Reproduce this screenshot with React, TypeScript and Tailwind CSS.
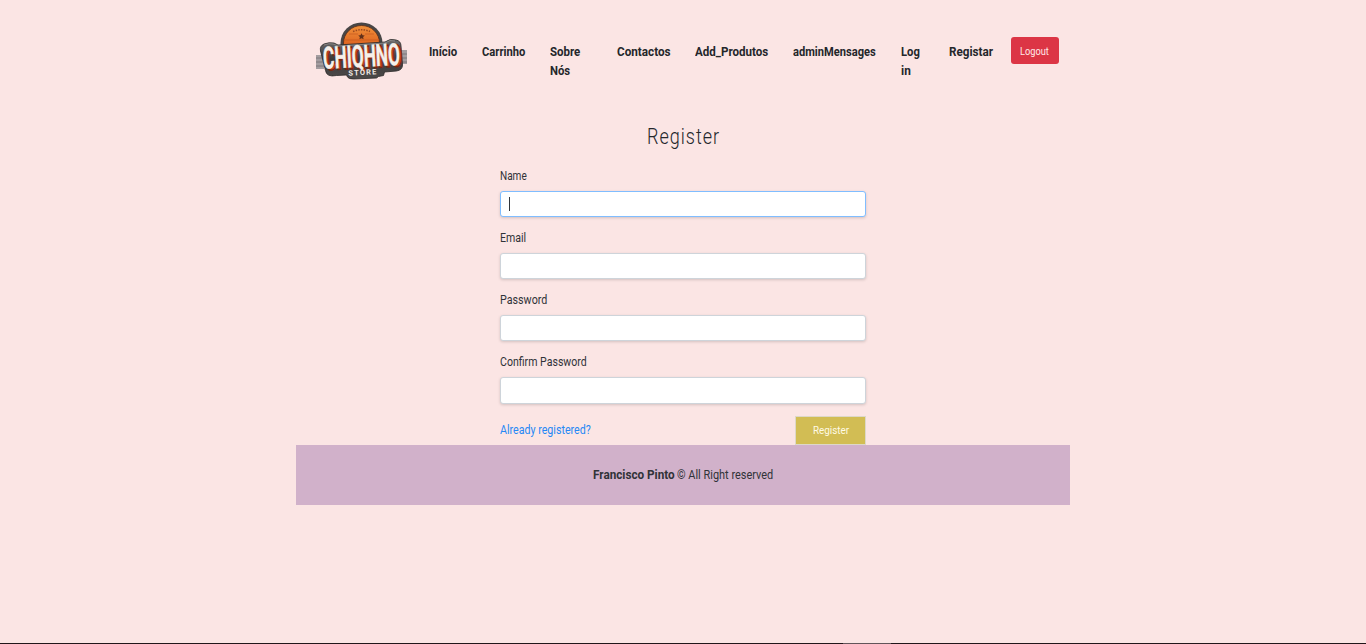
import { useLayoutEffect, useRef, useState } from "react";

/* Condenses a run of text so that it fills the width given in its class. */
function Fit({ children, className = "" }: { children: string; className?: string }) {
  const box = useRef<HTMLSpanElement>(null);
  const inner = useRef<HTMLSpanElement>(null);
  const [scale, setScale] = useState(1);
  useLayoutEffect(() => {
    if (box.current && inner.current && inner.current.offsetWidth > 0) {
      setScale(box.current.clientWidth / inner.current.offsetWidth);
    }
  }, [children]);
  return (
    <span ref={box} className={`block shrink-0 whitespace-nowrap ${className}`}>
      <span ref={inner} className="inline-block origin-left" style={{ transform: `scaleX(${scale})` }}>
        {children}
      </span>
    </span>
  );
}

function Logo() {
  return (
    <svg width="92" height="58" viewBox="0 0 92 58" className="block shrink-0 overflow-visible">
      <defs>
        <linearGradient id="sun" x1="0" y1="0" x2="0" y2="1">
          <stop offset="0" stopColor="#f0913a" />
          <stop offset="1" stopColor="#d9581a" />
        </linearGradient>
        <linearGradient id="plate" x1="0" y1="0" x2="0" y2="1">
          <stop offset="0" stopColor="#6d6c6c" />
          <stop offset="0.5" stopColor="#3c3a3a" />
          <stop offset="1" stopColor="#4c4a4a" />
        </linearGradient>
      </defs>
      <path d="M0 33h8v14H0zM82 28h9v14h-9z" fill="#a39da0" />
      <path d="M0 36h8M0 40h8M0 44h8M83 32h8M83 36h8M83 40h8" stroke="#7c777a" strokeWidth="1" />
      <path d="M24.500 27V21a21 20.500 0 0 1 42 0v6z" fill="#484646" />
      <path d="M27.500 28V21a18 17.500 0 0 1 36 0v7z" fill="url(#sun)" stroke="#5b2c18" strokeWidth="0.800" />
      <path d="M28 18h35M33 12h9M49 12h9" stroke="#bf521b" strokeWidth="0.600" />
      <path d="M45.500 11.200l1 2 2.300.3-1.700 1.500.5 2.300-2.100-1.100-2.100 1.100.5-2.300-1.700-1.500 2.300-.3z" fill="#61301a" />
      <path d="M37 9.500q8.500-3.500 17 0" fill="none" stroke="#9b491f" strokeWidth="1.600" strokeDasharray="1.500 1.200" />
      <path
        d="M8 22q5-2 10-1l4 2 47-3q5-4 11-2 5 1 5 6l1.500 19q0 5-6 6l-12 1-1 3.500-5 1-2 1.500-23 1q-5 0-6-2l-1-2-10 .5q-10 2-11-5L4.500 29q-1-5 3.500-7z"
        fill="url(#plate)" stroke="#292827" strokeWidth="0.800"
      />
      <path d="M8 23q5-2 9-1l5 2 47-3q5-4 10-2" fill="none" stroke="#9a9797" strokeWidth="0.700" />
      <g fontFamily="Roboto, sans-serif" fontWeight="700" textAnchor="middle">
        <g fontSize="30.500" transform="rotate(-3 46 34)">
          <text x="47.500" y="46.300" textLength="77" lengthAdjust="spacingAndGlyphs" fill="#c8441f" stroke="#7a2610" strokeWidth="1.600">CHIQHNO</text>
          <text x="45.500" y="44.800" textLength="77" lengthAdjust="spacingAndGlyphs" fill="#f6f0ea" stroke="#f6f0ea" strokeWidth="0.400">CHIQHNO</text>
        </g>
        <text x="46.500" y="53" fontSize="7.500" textLength="28" fill="#f1ebe6" transform="rotate(-3 46 52)">STORE</text>
      </g>
    </svg>
  );
}

function Field({ label, width, focused = false, tall = false }: { label: string; width: string; focused?: boolean; tall?: boolean }) {
  return (
    <div className="h-[62px]">
      <Fit className={`h-[23px] leading-4 ${width}`}>{label}</Fit>
      <div
        className={`flex items-center rounded-[3px] border bg-white px-2 shadow-[0_1px_3px_rgba(0,0,0,0.16)] ${
          tall ? "h-[27px]" : "h-[26px]"
        } ${focused ? "border-[#80bdff]" : "border-[#ced4da]"}`}
      >
        {focused && <span className="block h-[14px] w-px bg-[#30353a]" />}
      </div>
    </div>
  );
}

export default function App() {
  return (
    <div className="flex h-[644px] flex-col overflow-hidden bg-[#fbe5e4] font-[Roboto,sans-serif] text-[13px] text-[#303338]">
      <div className="mx-auto w-[774px]">
        <header className="flex h-[122px] items-start pt-[22px] pl-5">
          <Logo />
          <nav className="flex pt-5 text-[13px] leading-[19px] font-bold text-[#24272b]">
            <Fit className="ml-[20.500px] w-[28px]">Início</Fit>
            <Fit className="ml-[25px] w-[43px]">Carrinho</Fit>
            <div className="ml-[25px] w-[67px]">
              <Fit className="w-[29.500px]">Sobre</Fit>
              <Fit className="w-[19.500px]">Nós</Fit>
            </div>
            <Fit className="w-[54px]">Contactos</Fit>
            <Fit className="ml-[24.500px] w-[73px]">Add_Produtos</Fit>
            <Fit className="ml-[25px] w-[82.500px]">adminMensages</Fit>
            <div className="ml-[25px] w-[48px]">
              <Fit className="w-[18.500px]">Log</Fit>
              <Fit className="w-[9.500px]">in</Fit>
            </div>
            <Fit className="w-[44px]">Registar</Fit>
          </nav>
          <button className="mt-[15px] ml-[18px] flex h-[27px] w-[48px] items-center justify-center rounded-[3px] bg-[#dc3545] pt-[2px] text-[11.500px] text-[#ffe9e9]">
            <Fit className="w-[29px]">Logout</Fit>
          </button>
        </header>

        <form className="mx-auto w-[366px]">
          <h2 className="flex h-[46px] justify-center text-[22px] leading-[29px] font-light tracking-[1.200px] text-[#24272b]">
            <Fit className="w-[73px]">Register</Fit>
          </h2>
          <Field label="Name" width="w-[27px]" focused />
          <Field label="Email" width="w-[26px]" />
          <Field label="Password" width="w-[47px]" />
          <Field label="Confirm Password" width="w-[87px]" tall />
          <div className="flex h-[29px] items-center justify-between">
            <a href="#" className="pb-[2px] text-[#2588f5]">
              <Fit className="w-[91px]">Already registered?</Fit>
            </a>
            <button className="flex h-[29px] w-[71px] items-center justify-center border border-[#ddd8c8] bg-[#d2bd54] pt-px text-[11.500px] text-[#fffbe5]">
              <Fit className="w-[36px]">Register</Fit>
            </button>
          </div>
        </form>

        <footer className="flex h-[60px] items-center justify-center gap-[3px] bg-[#d1b1ca]">
          <Fit className="w-[81.500px] font-bold">Francisco Pinto</Fit>
          <Fit className="w-[96px]">© All Right reserved</Fit>
        </footer>
      </div>
      <div className="mt-auto flex h-px bg-[#211519]">
        <div className="ml-[843px] w-[48px] bg-[#625459]" />
      </div>
    </div>
  );
}
